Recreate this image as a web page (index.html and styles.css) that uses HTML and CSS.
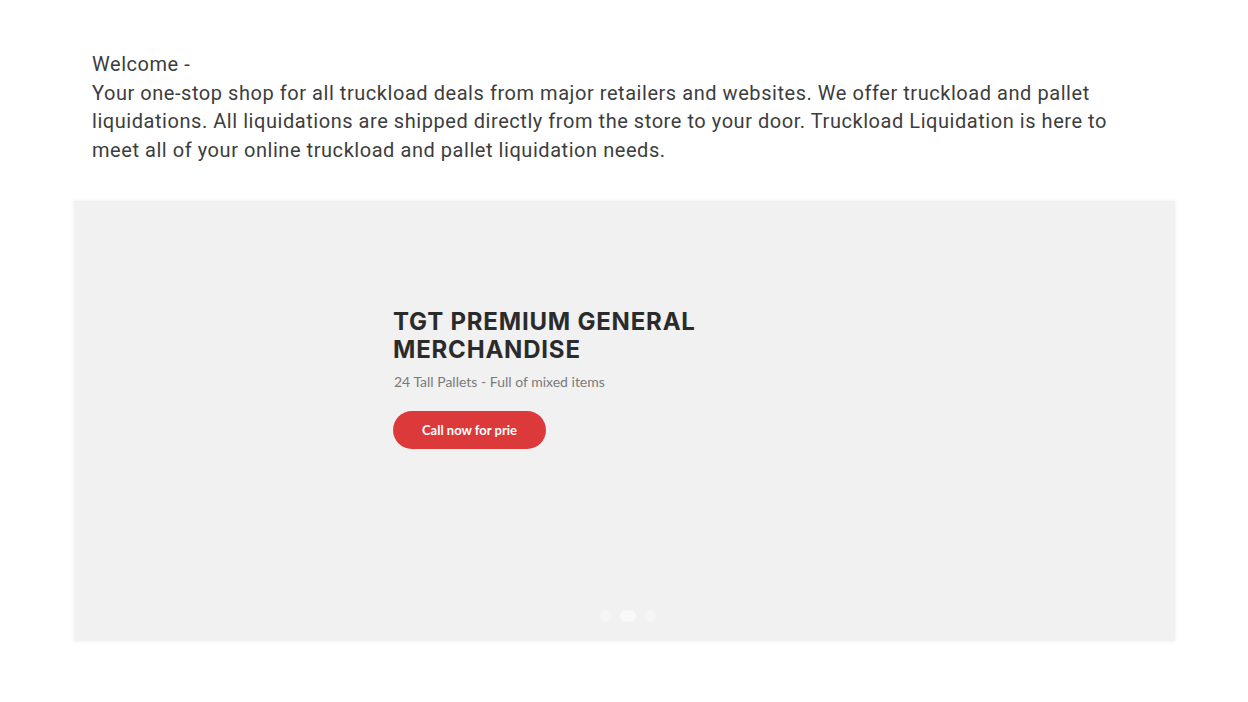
FILE: index.html
```html
<!DOCTYPE html>
<html>
<head>
<meta charset="utf-8">
<link rel="stylesheet" href="styles.css">
</head>
<body>
<main class="page">
  <section class="intro">
    <p>Welcome -<br>Your one-stop shop for all truckload deals from major retailers and websites. We offer truckload and pallet liquidations. All liquidations are shipped directly from the store to your door. Truckload Liquidation is here to meet all of your online truckload and pallet liquidation needs.</p>
  </section>
  <section class="banner">
    <div class="slide">
      <h2 class="title">TGT PREMIUM GENERAL<br>MERCHANDISE</h2>
      <p class="sub">24 Tall Pallets - Full of mixed items</p>
      <a class="btn">Call now for prie</a>
    </div>
    <div class="dots"><span></span><span class="on"></span><span></span></div>
  </section>
</main>
</body>
</html>
```
FILE: styles.css
```css
* { box-sizing: border-box; }
html, body { margin: 0; padding: 0; background: #fff; }
.page { width: 1248px; height: 702px; padding: 50px 73px 0 74px; }
.intro { padding: 0 40px 0 18px; }
.intro p {
  margin: 0;
  font-family: "Roboto", "Liberation Sans", sans-serif;
  font-size: 20px;
  line-height: 28.5px;
  color: #3d3d3d;
  letter-spacing: 0.55px;
}
.banner {
  margin-top: 37px;
  height: 440px;
  background: #f1f1f1;
  box-shadow: 0 0 4px 1px #f4f4f4;
  position: relative;
  display: flex;
  flex-direction: column;
  padding: 107px 0 0 319px;
}
.title {
  margin: 0;
  font-family: "Inter", "Open Sans", sans-serif;
  font-weight: 700;
  font-size: 24px;
  line-height: 28px;
  color: #2b2b2b;
  letter-spacing: 0.8px;
}
.sub {
  margin: 9px 0 0 1px;
  font-family: "Lato", sans-serif;
  font-size: 14px;
  color: #7a7a7a;
}
.btn {
  margin-top: 21px;
  width: 153px;
  height: 38px;
  border-radius: 19px;
  background: #dc3a3a;
  color: #fff;
  font-family: "Lato", sans-serif;
  font-weight: 700;
  font-size: 13px;
  display: flex;
  align-items: center;
  justify-content: center;
}
.dots {
  position: absolute;
  left: 526px;
  bottom: 19px;
  display: flex;
  gap: 8px;
}
.dots span { width: 12px; height: 12px; border-radius: 50%; background: #f5f5f5; }
.dots .on { width: 16px; background: #f9f9f9; }
```
